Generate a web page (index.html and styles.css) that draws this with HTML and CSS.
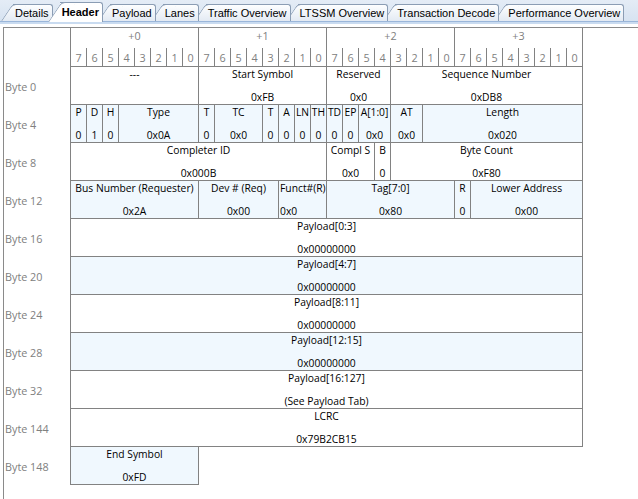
FILE: index.html
```html
<!DOCTYPE html>
<html>
<head>
<meta charset="utf-8">
<link rel="stylesheet" href="styles.css">
</head>
<body>
<div class="tabstrip">
  <div class="tab t1">Details</div>
  <div class="tab active">Header</div>
  <div class="tab t3">Payload</div>
  <div class="tab t4">Lanes</div>
  <div class="tab t5">Traffic Overview</div>
  <div class="tab t6">LTSSM Overview</div>
  <div class="tab t7">Transaction Decode</div>
  <div class="tab t8">Performance Overview</div>
</div>
<div class="tabline"></div>
<div class="panel">
  <div class="row head1">
    <div class="lbl"></div>
    <div class="bits">
      <div class="g">+0</div><div class="g">+1</div><div class="g">+2</div><div class="g">+3</div>
    </div>
  </div>
  <div class="row head2">
    <div class="lbl"></div>
    <div class="bits">
      <div class="b">7</div><div class="b">6</div><div class="b">5</div><div class="b">4</div><div class="b">3</div><div class="b">2</div><div class="b">1</div><div class="b">0</div>
      <div class="b">7</div><div class="b">6</div><div class="b">5</div><div class="b">4</div><div class="b">3</div><div class="b">2</div><div class="b">1</div><div class="b">0</div>
      <div class="b">7</div><div class="b">6</div><div class="b">5</div><div class="b">4</div><div class="b">3</div><div class="b">2</div><div class="b">1</div><div class="b">0</div>
      <div class="b">7</div><div class="b">6</div><div class="b">5</div><div class="b">4</div><div class="b">3</div><div class="b">2</div><div class="b">1</div><div class="b">0</div>
    </div>
  </div>

  <div class="row">
    <div class="lbl">Byte 0</div>
    <div class="bits">
      <div class="c s8"><span>---</span><span></span></div>
      <div class="c s8"><span>Start Symbol</span><span>0xFB</span></div>
      <div class="c s4"><span>Reserved</span><span>0x0</span></div>
      <div class="c s12"><span>Sequence Number</span><span>0xDB8</span></div>
    </div>
  </div>

  <div class="row alt">
    <div class="lbl">Byte 4</div>
    <div class="bits">
      <div class="c s1"><span>P</span><span>0</span></div>
      <div class="c s1"><span>D</span><span>1</span></div>
      <div class="c s1"><span>H</span><span>0</span></div>
      <div class="c s5"><span>Type</span><span>0x0A</span></div>
      <div class="c s1"><span>T</span><span>0</span></div>
      <div class="c s3"><span>TC</span><span>0x0</span></div>
      <div class="c s1"><span>T</span><span>0</span></div>
      <div class="c s1"><span>A</span><span>0</span></div>
      <div class="c s1"><span>LN</span><span>0</span></div>
      <div class="c s1"><span>TH</span><span>0</span></div>
      <div class="c s1"><span>TD</span><span>0</span></div>
      <div class="c s1"><span>EP</span><span>0</span></div>
      <div class="c s2"><span>A[1:0]</span><span>0x0</span></div>
      <div class="c s2"><span>AT</span><span>0x0</span></div>
      <div class="c s10"><span>Length</span><span>0x020</span></div>
    </div>
  </div>

  <div class="row">
    <div class="lbl">Byte 8</div>
    <div class="bits">
      <div class="c s16"><span>Completer ID</span><span>0x000B</span></div>
      <div class="c s3"><span>Compl S</span><span>0x0</span></div>
      <div class="c s1"><span>B</span><span>0</span></div>
      <div class="c s12"><span>Byte Count</span><span>0xF80</span></div>
    </div>
  </div>

  <div class="row alt">
    <div class="lbl">Byte 12</div>
    <div class="bits">
      <div class="c s8"><span>Bus Number (Requester)</span><span>0x2A</span></div>
      <div class="c s5"><span>Dev # (Req)</span><span>0x00</span></div>
      <div class="c s3 left"><span>Funct#(R)</span><span>0x0</span></div>
      <div class="c s8"><span>Tag[7:0]</span><span>0x80</span></div>
      <div class="c s1"><span>R</span><span>0</span></div>
      <div class="c s7"><span>Lower Address</span><span>0x00</span></div>
    </div>
  </div>

  <div class="row">
    <div class="lbl">Byte 16</div>
    <div class="bits"><div class="c s32"><span>Payload[0:3]</span><span>0x00000000</span></div></div>
  </div>
  <div class="row alt">
    <div class="lbl">Byte 20</div>
    <div class="bits"><div class="c s32"><span>Payload[4:7]</span><span>0x00000000</span></div></div>
  </div>
  <div class="row">
    <div class="lbl">Byte 24</div>
    <div class="bits"><div class="c s32"><span>Payload[8:11]</span><span>0x00000000</span></div></div>
  </div>
  <div class="row alt">
    <div class="lbl">Byte 28</div>
    <div class="bits"><div class="c s32"><span>Payload[12:15]</span><span>0x00000000</span></div></div>
  </div>
  <div class="row">
    <div class="lbl">Byte 32</div>
    <div class="bits"><div class="c s32"><span>Payload[16:127]</span><span>(See Payload Tab)</span></div></div>
  </div>
  <div class="row">
    <div class="lbl">Byte 144</div>
    <div class="bits"><div class="c s32"><span>LCRC</span><span>0x79B2CB15</span></div></div>
  </div>
  <div class="row alt">
    <div class="lbl">Byte 148</div>
    <div class="bits"><div class="c s8"><span>End Symbol</span><span>0xFD</span></div></div>
  </div>
</div>
</body>
</html>
```

FILE: styles.css
```css
html, body {
  margin: 0;
  padding: 0;
  background: #ffffff;
  height: 100%;
  overflow: hidden;
}

.tabstrip {
  display: flex;
  align-items: flex-end;
  height: 21px;
  padding-left: 13px;
  background: linear-gradient(#e4ecf6, #d7e3f1);
  position: relative;
}

.tab {
  position: relative;
  height: 16px;
  line-height: 17px;
  margin-left: 7px;
  padding: 0 3px 0 2px;
  font-family: "Liberation Sans", Arial, sans-serif;
  font-size: 11px;
  color: #000;
  background: linear-gradient(#fdfeff, #e3eaf3);
  border-top: 1px solid #8b9db4;
  border-right: 1px solid #8b9db4;
  border-top-right-radius: 3px;
  white-space: nowrap;
}
.tab:first-child { margin-left: 0; }
.tab::before {
  content: "";
  position: absolute;
  left: -12px;
  top: -1px;
  bottom: 0;
  width: 14px;
  background: inherit;
  border-left: 1px solid #8b9db4;
  border-top: 1px solid #8b9db4;
  border-top-left-radius: 4px;
  transform: skewX(-34deg);
  transform-origin: bottom left;
  z-index: -1;
}
.t1 { z-index: 10; }
.t3 { z-index: 8; }
.t4 { z-index: 7; }
.t5 { z-index: 6; }
.t6 { z-index: 5; }
.t7 { z-index: 4; }
.t8 { z-index: 3; }
.tab.active {
  z-index: 20;
  height: 19px;
  line-height: 19px;
  margin-bottom: -1px;
  font-weight: bold;
  background: #ffffff;
}

.tabline {
  height: 5px;
  border-top: 1px solid #9ab6da;
  background: linear-gradient(#c9dbf0 0, #c9dbf0 2px, #ffffff 2px);
}

.panel {
  margin-left: 3px;
  border-left: 1px solid #8a8a8a;
  border-top: 1px solid #8a8a8a;
  height: calc(100vh - 27px);
  box-sizing: border-box;
  overflow: hidden;
  font-family: "Open Sans", "Noto Sans", sans-serif;
  font-size: 10.3px;
  color: #000;
}

.row {
  display: flex;
}
.lbl {
  width: 66px;
  flex: none;
  display: flex;
  align-items: center;
  padding-left: 1px;
  box-sizing: border-box;
  color: #808080;
  font-size: 10.8px;
  white-space: nowrap;
}
.bits {
  display: grid;
  grid-template-columns: repeat(32, 16px);
  border-left: 1px solid #828282;
}

.head1 .bits { height: 20px; }
.g {
  grid-column: span 8;
  border-right: 1px solid #828282;
  text-align: center;
  color: #808080;
  font-size: 10.8px;
  line-height: 14px;
  padding-top: 1px;
}
.b {
  height: 19px;
  box-sizing: border-box;
  border-right: 1px solid #828282;
  border-bottom: 1px solid #828282;
  text-align: center;
  color: #808080;
  font-size: 10.8px;
  line-height: 14px;
  padding-top: 3px;
}

.c {
  height: 38px;
  box-sizing: border-box;
  border-right: 1px solid #828282;
  border-bottom: 1px solid #828282;
  display: flex;
  flex-direction: column;
  justify-content: space-between;
  align-items: center;
  line-height: 14px;
  padding-top: 0;
  white-space: nowrap;
  overflow: hidden;
}
.alt .c { background: #f0f8fe; }
.c.left { align-items: flex-start; padding-left: 1px; }

.s1 { grid-column: span 1; }
.s2 { grid-column: span 2; }
.s3 { grid-column: span 3; }
.s4 { grid-column: span 4; }
.s5 { grid-column: span 5; }
.s7 { grid-column: span 7; }
.s8 { grid-column: span 8; }
.s10 { grid-column: span 10; }
.s12 { grid-column: span 12; }
.s16 { grid-column: span 16; }
.s32 { grid-column: span 32; }
```
